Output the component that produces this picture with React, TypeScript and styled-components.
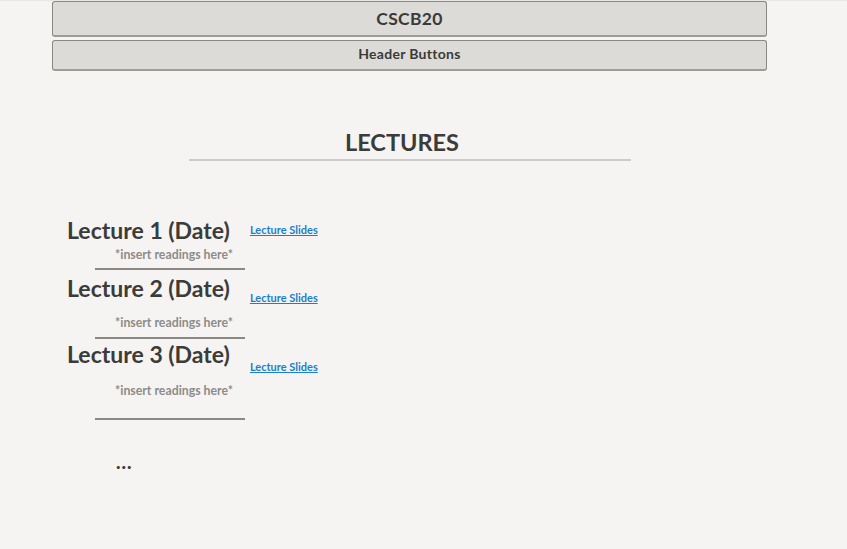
import styled, { createGlobalStyle } from 'styled-components'

const GlobalStyle = createGlobalStyle`
	html, body {
		margin: 0;
		padding: 0;
		background: #f5f4f2;
	}
	body {
		border-top: 1px solid #e8e7e4;
		font-family: Lato, "Open Sans", sans-serif;
		color: #3b3b39;
		height: 548px;
	}
`

const Page = styled.div`
	width: 715px;
	margin-left: 52px;
`

const HeaderBox = styled.div<{ $height: number; $size: number; $lift: number }>`
	box-sizing: border-box;
	height: ${(p) => p.$height}px;
	padding-bottom: ${(p) => p.$lift}px;
	display: flex;
	align-items: center;
	justify-content: center;
	background: #dcdbd7;
	border: 1px solid #8a8985;
	border-bottom: 2px solid #9e9c98;
	border-radius: 3px;
	font-weight: 700;
	font-size: ${(p) => p.$size}px;
	color: #3a3a38;
	letter-spacing: 0.3px;
	margin-bottom: 3px;
`

const SectionTitle = styled.h2`
	box-sizing: border-box;
	width: 442px;
	margin: 58px 0 0 137px;
	padding: 0 16px 4px 0;
	text-align: center;
	font-size: 23.5px;
	font-weight: 700;
	line-height: 26px;
	border-bottom: 2px solid #cfccc7;
	color: #3b3b39;
`

const LectureList = styled.div`
	margin-top: 56px;
	padding-left: 15px;
`

const Lecture = styled.div<{ $top: number }>`
	margin-top: ${(p) => p.$top}px;
`

const LectureHead = styled.div`
	display: flex;
	align-items: flex-start;
	height: 26px;
`

const LectureTitle = styled.h3`
	margin: 0;
	font-size: 23px;
	font-weight: 700;
	line-height: 26px;
	color: #3b3b39;
`

const SlidesLink = styled.a<{ $drop: number }>`
	margin: ${(p) => p.$drop}px 0 0 20px;
	font-size: 11px;
	font-weight: 700;
	line-height: 13px;
	color: #1a7fcf;
	text-decoration: underline;
`

const Readings = styled.div<{ $top: number; $bottom: number }>`
	box-sizing: border-box;
	width: 150px;
	margin: ${(p) => p.$top}px 0 0 28px;
	padding: 0 12px ${(p) => p.$bottom}px 0;
	text-align: right;
	font-size: 12.3px;
	font-weight: 700;
	line-height: 14px;
	color: #8d8c88;
	border-bottom: 2px solid #8a8984;
`

const More = styled.div`
	margin: 30px 0 0 49px;
	font-size: 19px;
	font-weight: 900;
	letter-spacing: 1px;
	color: #3b3b39;
`

const lectures = [
	{ n: 1, top: 0, drop: 6, rTop: 5, rBottom: 6 },
	{ n: 2, top: 5, drop: 16, rTop: 15, rBottom: 7 },
	{ n: 3, top: 2, drop: 19, rTop: 17, rBottom: 20 },
]

const App = () => {
	return (
		<>
			<GlobalStyle />
			<Page>
				<HeaderBox $height={36} $size={17.5} $lift={0}>
					CSCB20
				</HeaderBox>
				<HeaderBox $height={31} $size={14} $lift={3}>
					Header Buttons
				</HeaderBox>
				<SectionTitle>LECTURES</SectionTitle>
				<LectureList>
					{lectures.map((l) => (
						<Lecture key={l.n} $top={l.top}>
							<LectureHead>
								<LectureTitle>Lecture {l.n} (Date)</LectureTitle>
								<SlidesLink href="#" $drop={l.drop}>
									Lecture Slides
								</SlidesLink>
							</LectureHead>
							<Readings $top={l.rTop} $bottom={l.rBottom}>
								*insert readings here*
							</Readings>
						</Lecture>
					))}
					<More>...</More>
				</LectureList>
			</Page>
		</>
	)
}

export default App
